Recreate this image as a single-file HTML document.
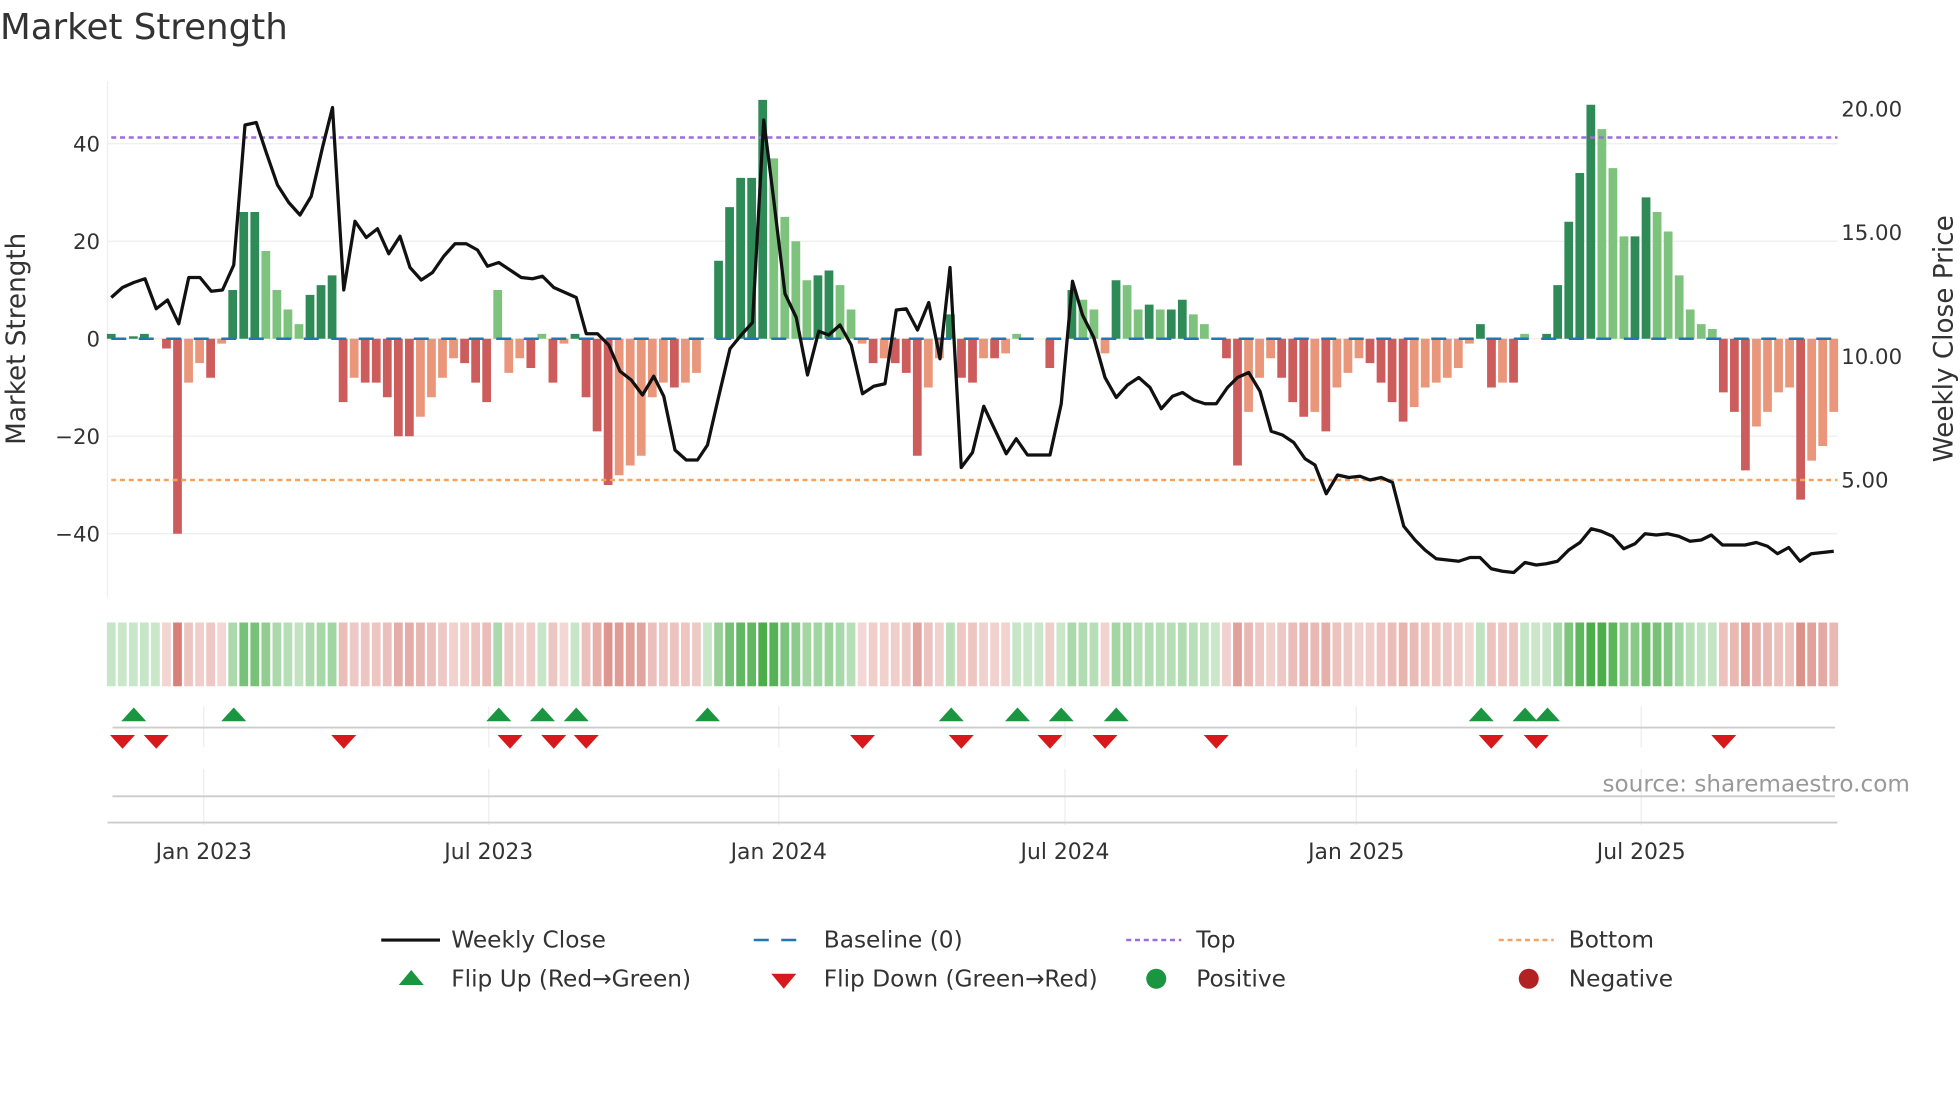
<!DOCTYPE html>
<html><head><meta charset="utf-8"><style>
html,body{margin:0;padding:0;background:#fff;}
svg{display:block;font-family:"DejaVu Sans","Liberation Sans",sans-serif;}
</style></head><body>
<svg id="s" xmlns="http://www.w3.org/2000/svg" width="1960" height="1102" viewBox="0 0 1568 881.6">
<rect width="1568" height="882" fill="#fff"/>
<text x="0" y="31" font-size="28.5" fill="#333">Market Strength</text>
<g stroke="#eeeeee" stroke-width="1">
<line x1="86" y1="115" x2="1470" y2="115"/><line x1="86" y1="193" x2="1470" y2="193"/>
<line x1="86" y1="271" x2="1470" y2="271"/><line x1="86" y1="349" x2="1470" y2="349"/>
<line x1="86" y1="427" x2="1470" y2="427"/>
<line x1="86" y1="65" x2="86" y2="478"/>
<line x1="163" y1="565" x2="163" y2="598"/><line x1="391" y1="565" x2="391" y2="598"/><line x1="623" y1="565" x2="623" y2="598"/><line x1="852" y1="565" x2="852" y2="598"/><line x1="1085" y1="565" x2="1085" y2="598"/><line x1="1313" y1="565" x2="1313" y2="598"/>
<line x1="163" y1="615" x2="163" y2="660"/><line x1="391" y1="615" x2="391" y2="660"/><line x1="623" y1="615" x2="623" y2="660"/><line x1="852" y1="615" x2="852" y2="660"/><line x1="1085" y1="615" x2="1085" y2="660"/><line x1="1313" y1="615" x2="1313" y2="660"/>
</g>
<line x1="90" y1="582" x2="1468" y2="582" stroke="#ccc" stroke-width="1.5"/>
<line x1="90" y1="637" x2="1468" y2="637" stroke="#ccc" stroke-width="1.5"/>
<line x1="86" y1="658" x2="1470" y2="658" stroke="#ccc" stroke-width="1.5"/>
<g id="bars"></g>
<g id="heat"></g>
<line x1="89" y1="271" x2="1468" y2="271" stroke="#1f77b4" stroke-width="2" stroke-dasharray="12 10"/>
<line x1="89" y1="110" x2="1470" y2="110" stroke="#9b6bdf" stroke-width="2" stroke-dasharray="4 3"/>
<line x1="89" y1="384" x2="1470" y2="384" stroke="#f4a460" stroke-width="2" stroke-dasharray="4 3"/>
<polyline id="price" fill="none" stroke="#111" stroke-width="2.6" stroke-linejoin="round"/>
<g id="tri"></g>
<g font-size="17" fill="#333" text-anchor="end">
<text x="80" y="121">40</text><text x="80" y="199">20</text><text x="80" y="277">0</text><text x="80" y="355">−20</text><text x="80" y="433">−40</text>
</g>
<g font-size="17" fill="#333">
<text x="1473" y="93">20.00</text><text x="1473" y="192">15.00</text><text x="1473" y="291">10.00</text><text x="1473" y="390">5.00</text>
</g>
<text transform="translate(20,271) rotate(-90)" font-size="21" fill="#333" text-anchor="middle">Market Strength</text>
<text transform="translate(1562,271) rotate(-90)" font-size="21" fill="#333" text-anchor="middle">Weekly Close Price</text>
<g font-size="17.5" fill="#333" text-anchor="middle">
<text x="163" y="687">Jan 2023</text><text x="391" y="687">Jul 2023</text><text x="623" y="687">Jan 2024</text><text x="852" y="687">Jul 2024</text><text x="1085" y="687">Jan 2025</text><text x="1313" y="687">Jul 2025</text>
</g>
<text x="1282" y="633" font-size="18.5" fill="#999">source: sharemaestro.com</text>
<g font-size="18.6" fill="#333">
<line x1="305" y1="752" x2="352" y2="752" stroke="#111" stroke-width="2.5"/>
<text x="361" y="758">Weekly Close</text>
<line x1="603" y1="752" x2="647" y2="752" stroke="#1f77b4" stroke-width="2" stroke-dasharray="12 10"/>
<text x="659" y="758">Baseline (0)</text>
<line x1="901" y1="752" x2="945" y2="752" stroke="#9b6bdf" stroke-width="2" stroke-dasharray="4 3"/>
<text x="957" y="758">Top</text>
<line x1="1199" y1="752" x2="1243" y2="752" stroke="#f4a460" stroke-width="2" stroke-dasharray="4 3"/>
<text x="1255" y="758">Bottom</text>
<polygon points="319,788 339,788 329,776" fill="#1a9641"/>
<text x="361" y="789">Flip Up (Red→Green)</text>
<polygon points="617,779 637,779 627,791" fill="#d7191c"/>
<text x="659" y="789">Flip Down (Green→Red)</text>
<circle cx="925" cy="783" r="8" fill="#1a9641"/>
<text x="957" y="789">Positive</text>
<circle cx="1223" cy="783" r="8" fill="#b22222"/>
<text x="1255" y="789">Negative</text>
</g>
</svg>
<script>
var NS="http://www.w3.org/2000/svg";
var v=[1,0,0.5,1,0,-2,-40,-9,-5,-8,-1,10,26,26,18,10,6,3,9,11,13,-13,-8,-9,-9,-12,-20,-20,-16,-12,-8,-4,-5,-9,-13,10,-7,-4,-6,1,-9,-1,1,-12,-19,-30,-28,-26,-24,-12,-9,-10,-9,-7,0,16,27,33,33,49,37,25,20,12,13,14,11,6,-1,-5,-4,-5,-7,-24,-10,-4,5,-8,-9,-4,-4,-3,1,0,0,-6,0,10,8,6,-3,12,11,6,7,6,6,8,5,3,0,-4,-26,-15,-8,-4,-8,-13,-16,-15,-19,-10,-7,-4,-5,-9,-13,-17,-14,-10,-9,-8,-6,-1,3,-10,-9,-9,1,0,1,11,24,34,48,43,35,21,21,29,26,22,13,6,3,2,-11,-15,-27,-18,-15,-11,-10,-33,-25,-22,-15];
var x0=89,dx=(1467-89)/(v.length-1);
var bars=document.getElementById("bars"),heat=document.getElementById("heat");
function R(g,x,y,w,h,f,o){var r=document.createElementNS(NS,"rect");r.setAttribute("x",x);r.setAttribute("y",y);r.setAttribute("width",w);r.setAttribute("height",h);r.setAttribute("fill",f);if(o!=null)r.setAttribute("fill-opacity",o);g.appendChild(r);}
for(var i=0;i<v.length;i++){
 var x=x0+i*dx,val=v[i],p=i?v[i-1]:0,grow=Math.abs(val)>=Math.abs(p);
 var h=Math.abs(val)*3.9,col;
 if(val>=0)col=grow?"#2e8b57":"#7dc27d";else col=grow?"#cd5c5c":"#e9967a";
 if(h>0.3)R(bars,x-3.5,val>=0?271-h:271,7,h,col);
 var a=0.25+0.6*Math.min(1,Math.abs(val)/40);
 R(heat,x-3.5,498,7,51,val>=0?"#2ca02c":"#c0392b",val>=0?a:a*0.75);
}
var pts="89,238 98,230 107,226 116,223 125,247 134,240 143,259 151,222 160,222 169,233 178,232 187,212 196,100 205,98 213,122 222,148 231,162 240,172 249,157 258,118 266,86 275,232 284,177 293,190 302,183 311,203 320,189 328,214 337,224 346,218 355,205 364,195 373,195 382,200 390,213 399,210 408,216 417,222 426,223 434,221 443,230 452,234 461,238 469,267 478,267 487,276 496,297 505,304 514,316 523,301 531,317 540,360 549,368 558,368 566,356 575,317 584,279 593,268 602,258 611,96 619,160 628,235 637,254 646,300 655,265 663,268 672,260 681,276 690,315 699,309 708,307 717,248 725,247 734,264 743,242 752,287 760,214 769,374 778,362 787,325 796,344 805,363 813,351 822,364 831,364 840,364 849,323 858,225 866,252 875,270 884,302 893,318 902,308 911,302 920,310 929,327 938,317 946,314 955,320 964,323 973,323 982,310 990,302 999,298 1008,313 1017,345 1026,348 1035,354 1044,367 1052,372 1061,395 1070,380 1079,382 1088,381 1096,384 1105,382 1114,386 1123,421 1132,432 1140,440 1149,447 1158,448 1167,449 1176,446 1184,446 1193,455 1202,457 1211,458 1220,450 1229,452 1237,451 1246,449 1255,440 1264,434 1273,423 1281,425 1290,429 1299,439 1308,435 1316,427 1325,428 1334,427 1343,429 1352,433 1361,432 1369,428 1378,436 1387,436 1396,436 1405,434 1414,437 1422,443 1431,438 1440,449 1449,443 1458,442 1467,441";
document.getElementById("price").setAttribute("points",pts);
var tri=document.getElementById("tri");
function P(s,f){var p=document.createElementNS(NS,"polygon");p.setAttribute("points",s);p.setAttribute("fill",f);tri.appendChild(p);}
[107,187,399,434,461,566,761,814,849,893,1185,1220,1238].forEach(function(x){P((x-10)+",577 "+(x+10)+",577 "+x+",566","#1a9641");});
[98,125,275,408,443,469,690,769,840,884,973,1193,1229,1379].forEach(function(x){P((x-10)+",588 "+(x+10)+",588 "+x+",599","#d7191c");});
</script>
</body></html>
